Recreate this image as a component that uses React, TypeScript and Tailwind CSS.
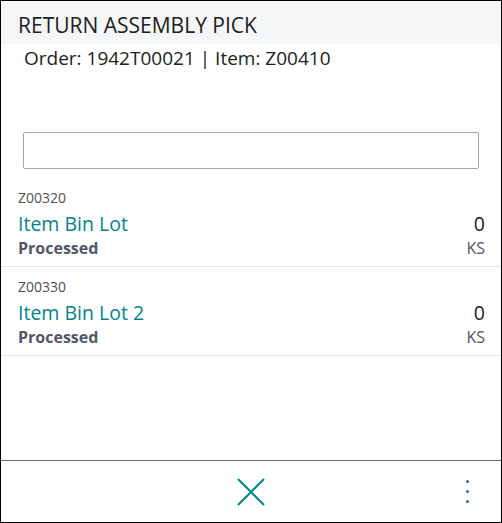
import React from "react";

const items = [
  { code: "Z00320", name: "Item Bin Lot", qty: "0", uom: "KS", status: "Processed" },
  { code: "Z00330", name: "Item Bin Lot 2", qty: "0", uom: "KS", status: "Processed" },
];

export default function App() {
  return (
    <div
      className="w-[502px] h-[523px] border border-black bg-white flex flex-col overflow-hidden"
      style={{ fontFamily: '"Open Sans", "Noto Sans", sans-serif' }}
    >
      <div className="h-[43px] shrink-0 bg-[#f5f6f7] pl-[17px] pt-[14px]">
        <div className="text-[21px] leading-[21px] text-[#212121] whitespace-nowrap">RETURN ASSEMBLY PICK</div>
      </div>
      <div className="h-[88px] shrink-0 pl-[23px] pt-[2px]">
        <div className="text-[19px] leading-[24px] text-[#212121] whitespace-nowrap">Order: 1942T00021 | Item: Z00410</div>
      </div>
      <div className="px-[22px] shrink-0">
        <div className="h-[37px] border border-[#a6a6a6] rounded-[2px]" />
      </div>
      <div className="mt-[9px] flex flex-col">
        {items.map((it) => (
          <div key={it.code} className="h-[89px] border-b border-[#e6e6e6] pl-[17px] pr-[16px] pt-[11px] flex justify-between">
            <div className="flex flex-col">
              <span className="text-[14px] leading-[18px] text-[#505050]">{it.code}</span>
              <span className="text-[19.5px] leading-[33px] text-[#00858a]">{it.name}</span>
              <span className="text-[16px] leading-[16px] font-bold text-[#505865]">{it.status}</span>
            </div>
            <div className="flex flex-col items-end pt-[18px]">
              <span className="text-[19.5px] leading-[33px] text-[#212121]">{it.qty}</span>
              <span className="text-[16px] leading-[16px] text-[#505865]">{it.uom}</span>
            </div>
          </div>
        ))}
      </div>
      <div className="flex-1" />
      <div className="h-[62px] shrink-0 border-t border-[#6b6b6b] flex items-center relative">
        <div className="flex-1 flex justify-center">
          <svg width="28" height="28" viewBox="0 0 28 28" fill="none" stroke="#00858a" strokeWidth="2">
            <path d="M1 1 L27 27 M27 1 L1 27" />
          </svg>
        </div>
        <div className="absolute right-[32px] top-[19px] flex flex-col gap-[7px]">
          <span className="w-[3px] h-[3px] rounded-full bg-[#00858a]" />
          <span className="w-[3px] h-[3px] rounded-full bg-[#00858a]" />
          <span className="w-[3px] h-[3px] rounded-full bg-[#00858a]" />
        </div>
      </div>
    </div>
  );
}
